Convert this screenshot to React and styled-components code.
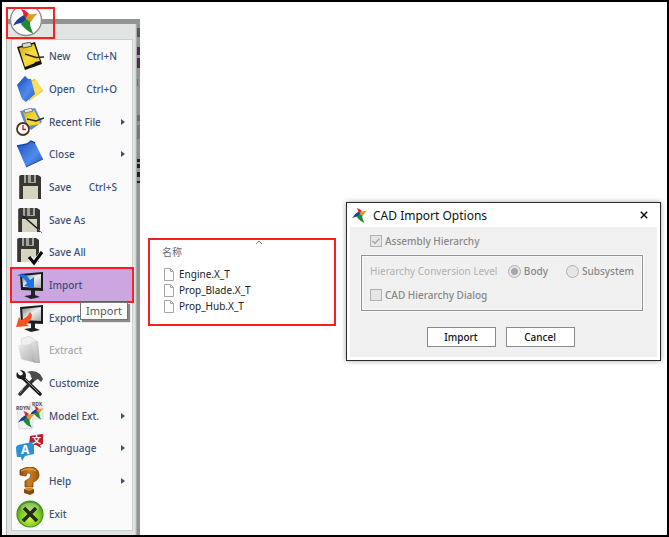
import React from "react";
import styled, { createGlobalStyle } from "styled-components";

const GlobalStyle = createGlobalStyle`
  * {
    box-sizing: border-box;
  }
  body {
    margin: 0;
    background: #fff;
    font-family: "Noto Sans", "Noto Sans CJK SC", sans-serif;
  }
  button, input {
    font-family: inherit;
  }
`;

const Page = styled.main`
  display: flex;
  align-items: flex-start;
  min-height: 100vh;
  padding: 5px 6px 0 4px;
  border: 2px solid #000;
`;

/* ---------- application menu ---------- */

const MenuColumn = styled.div`
  position: relative;
  display: flex;
  align-self: stretch;
  width: 134px;
  flex-shrink: 0;
  padding-top: 12px;
`;

const LogoButton = styled.button`
  position: absolute;
  top: 0;
  left: 0;
  z-index: 1;
  width: 49px;
  height: 32px;
  padding: 0;
  border: 2px solid #fa1e1e;
  background: none;
  overflow: hidden;
`;

const LogoCircle = styled.svg`
  display: block;
  width: 34px;
  height: 34px;
  margin: -6px 0 0 1px;
`;

const MenuFrame = styled.nav`
  position: relative;
  display: flex;
  flex: 1;
  padding: 20px 7px 4px 5px;
  border-top: 5px solid #929493;
  background: linear-gradient(
    to right,
    #b4b8b6 1px,
    #e0e5e2 1px calc(100% - 5px),
    #bfc5c2 calc(100% - 4px),
    #8f9391 calc(100% - 3px)
  );
`;

const Behind = styled.svg`
  position: absolute;
  top: 0;
  right: 0;
  width: 3px;
  height: 170px;
`;

const MenuList = styled.ul`
  display: flex;
  flex-direction: column;
  flex: 1;
  margin: -5px 0 0;
  padding: 0;
  border: 1px solid #c9d0cd;
  background: #fafafb;
  list-style: none;
`;

const MenuItem = styled.li`
  position: relative;
  display: flex;
  flex: 1 1 0;
  min-height: 30px;
`;

const MenuButton = styled.button`
  display: grid;
  grid-template-columns: 28px 1fr auto 8px;
  align-items: center;
  width: 100%;
  padding: 0 7px 0 4px;
  border: 0;
  background: ${(props) => (props.$active ? "#cba6e0" : "none")};
  outline: ${(props) => (props.$active ? "2px solid #fa1e1e" : "none")};
  color: ${(props) => (props.disabled ? "#a9a9ab" : "#3d5078")};
  font-size: 10px;
  font-weight: 500;
  line-height: 14px;
  text-align: left;
  white-space: nowrap;

  svg {
    display: block;
  }
`;

const MenuLabel = styled.span`
  padding-left: 5px;
`;

const Arrow = styled.span`
  justify-self: end;
  border: 3px solid transparent;
  border-left: 4px solid #3d5078;
  border-right: 0;
`;

const Tooltip = styled.span`
  position: absolute;
  top: 33px;
  left: 68px;
  z-index: 2;
  padding: 0 5px;
  border: 1px solid #767676;
  background: #fff;
  box-shadow: 2px 2px 1px #8a8a8a;
  color: #575757;
  font-size: 11px;
  line-height: 16px;
`;

/* ---------- file list ---------- */

const FileBox = styled.section`
  position: relative;
  flex: 0 1 188px;
  margin: 231px 0 0 8px;
  padding: 6px 12px 10px;
  border: 2px solid #fa1e1e;
`;

const SortMark = styled.svg`
  position: absolute;
  top: 0;
  left: 105px;
  width: 8px;
  height: 5px;
`;

const FileHeading = styled.h2`
  margin: 0 0 8px;
  color: #5b6b84;
  font-size: 10px;
  font-weight: 400;
  line-height: 12px;
`;

const FileList = styled.ul`
  margin: 0;
  padding: 0 0 0 2px;
  list-style: none;
`;

const FileRow = styled.li`
  display: flex;
  align-items: center;
  gap: 5px;
  height: 16px;
  color: #222;
  font-size: 10px;
`;

/* ---------- dialog ---------- */

const Dialog = styled.section`
  flex: 1;
  margin: 195px 0 0 10px;
  padding: 0 3px 3px;
  border: 1px solid #2b2b2b;
  background: #fff;
  box-shadow: 0 0 5px rgba(0, 0, 0, 0.35);
`;

const DialogHeader = styled.header`
  display: flex;
  align-items: center;
  gap: 6px;
  height: 24px;
  padding: 0 7px 0 2px;
`;

const DialogTitle = styled.h1`
  flex: 1;
  margin: 0;
  padding-top: 2px;
  color: #111;
  font-size: 12px;
  font-weight: 400;
  line-height: 16px;
`;

const CloseButton = styled.button`
  display: flex;
  padding: 2px;
  border: 0;
  background: none;
`;

const DialogBody = styled.form`
  padding: 7px 14px 10px 11px;
  background: #f0f0f0;
`;

const Option = styled.label`
  display: flex;
  align-items: center;
  gap: 3px;
  color: #878787;
  font-size: 10px;
  font-weight: 500;
  line-height: 14px;
  white-space: nowrap;
`;

const TopOption = styled(Option)`
  padding-left: 9px;
`;

const Check = styled.input`
  appearance: none;
  width: 12px;
  height: 12px;
  margin: 0;
  border: 1px solid #b0b0b0;
  background: #e6e6e6;

  &:checked {
    background: #e6e6e6
      url("data:image/svg+xml,%3Csvg xmlns='http://www.w3.org/2000/svg' viewBox='0 0 10 10'%3E%3Cpath d='M1.5 5l2.5 2.5 4.5-5' fill='none' stroke='%23a0a0a0' stroke-width='1.2'/%3E%3C/svg%3E");
  }
`;

const Radio = styled.input`
  appearance: none;
  width: 13px;
  height: 13px;
  margin: 0;
  border: 1px solid #b0b0b0;
  border-radius: 50%;
  background: #e6e6e6;

  &:checked {
    background: radial-gradient(circle, #a6a6a6 3px, #e6e6e6 4px);
  }
`;

const Group = styled.fieldset`
  display: flex;
  flex-direction: column;
  gap: 10px;
  margin: 7px 0 16px;
  padding: 8px 8px 8px;
  border: 1px solid #929292;
  box-shadow: inset 0 0 0 1px #fafafa, 0 0 0 1px #fafafa;
`;

const LevelRow = styled.div`
  display: flex;
  align-items: center;
`;

const LevelName = styled.span`
  flex: 1;
  color: #b0b0b0;
  font-size: 10px;
  line-height: 14px;
  white-space: nowrap;
`;

const Radios = styled.div`
  display: flex;
  gap: 18px;
`;

const Actions = styled.div`
  display: flex;
  justify-content: center;
  gap: 10px;
  padding-right: 3px;
`;

const ActionButton = styled.button`
  width: 69px;
  height: 20px;
  padding: 0;
  border: 1px solid #8a8a8a;
  background: #fff;
  color: #111;
  font-size: 10px;
  font-weight: 500;
`;

/* ---------- icons, all on a 28px grid ---------- */

const Icon = ({ children, size = 28 }) => (
  <svg width={size} height={size} viewBox="0 0 28 28" aria-hidden="true">
    {children}
  </svg>
);

const StarShape = () => (
  <>
    <path d="M9 0 Q14 1 18 5 L15 11 L12 8 Q12 4 9 0z" fill="#e2232b" />
    <path d="M28 5 Q23 9 20 15 L14 12 L17 6 Q22 6 28 5z" fill="#dd9a22" />
    <path d="M23 28 Q15 25 9 17 L14 11 L19 14 Q19 21 23 28z" fill="#1d8b34" />
    <path d="M0 19 Q4 11 12 7 L15 11 L10 16 Q5 16 0 19z" fill="#1b3a9c" />
  </>
);

const Gradients = () => (
  <svg width="0" height="0" style={{ position: "absolute" }} aria-hidden="true">
    <defs>
      <linearGradient id="yellow" x1="0" y1="0" x2="1" y2="1">
        <stop offset="0" stopColor="#c9a515" />
        <stop offset="0.5" stopColor="#f8dc3c" />
        <stop offset="1" stopColor="#f1c81e" />
      </linearGradient>
      <linearGradient id="blue" x1="0" y1="0" x2="1" y2="1">
        <stop offset="0" stopColor="#1d50c4" />
        <stop offset="0.6" stopColor="#4f8bea" />
        <stop offset="1" stopColor="#2456c4" />
      </linearGradient>
      <linearGradient id="screen" x1="0" y1="0" x2="1" y2="1">
        <stop offset="0" stopColor="#77797c" />
        <stop offset="0.5" stopColor="#eceeef" />
        <stop offset="1" stopColor="#a4a7aa" />
      </linearGradient>
      <linearGradient id="paper" x1="0" y1="0" x2="1" y2="1">
        <stop offset="0" stopColor="#ececec" />
        <stop offset="1" stopColor="#adadad" />
      </linearGradient>
      <linearGradient id="brown" x1="0" y1="0" x2="1" y2="0">
        <stop offset="0" stopColor="#8a4b08" />
        <stop offset="0.5" stopColor="#cf801c" />
        <stop offset="1" stopColor="#96540c" />
      </linearGradient>
      <radialGradient id="green" cx="0.5" cy="0.65" r="0.6">
        <stop offset="0" stopColor="#d4f54a" />
        <stop offset="0.6" stopColor="#82cc22" />
        <stop offset="1" stopColor="#4c9c18" />
      </radialGradient>
    </defs>
  </svg>
);

const NewIcon = () => (
  <Icon>
    <path d="M1 5 L19 0 L26 22 L9 28z" fill="#15130c" />
    <path d="M3 6 L18 2 L24 19 L9 25z" fill="url(#yellow)" />
    <path d="M17 25 L19 20 L25 19z" fill="#15130c" />
    <path d="M6 2 L14 0 L16 4 L7 6z" fill="#d8d8d2" stroke="#33312a" strokeWidth="0.8" />
    <path d="M9 12 L20 15.5 L28 15" fill="none" stroke="#2a2820" strokeWidth="1.5" />
  </Icon>
);

const OpenIcon = () => (
  <Icon>
    <path d="M13 6 L19 4 L27 16 L13 26z" fill="#e0b81b" />
    <path d="M15 6 L20 5 L27 15 L14 25z" fill="#f9df5c" />
    <path d="M1 10 L9 1 L12 4 L15 4 L19 19 L10 27 L6 24z" fill="url(#blue)" />
    <path d="M1 10 L9 1 L12 4 L4 12z" fill="#2d63cb" opacity="0.6" />
  </Icon>
);

const RecentIcon = () => (
  <Icon>
    <path d="M4 3 L19 0 L26 14 L15 22 L8 14z" fill="#5f86d6" />
    <path d="M7 4 L18 2 L25 16 L12 18z" fill="url(#yellow)" />
    <path d="M8 2 L15 0 L17 3 L9 5z" fill="#e6e6ea" stroke="#50618d" strokeWidth="0.7" />
    <path d="M11 11 L20 13 L28 10" fill="none" stroke="#2a2820" strokeWidth="1.5" />
    <circle cx="7" cy="21" r="6" fill="#fff" stroke="#4d3520" strokeWidth="1.8" />
    <path d="M7 17 V21.5 H10" fill="none" stroke="#dc2027" strokeWidth="1.4" />
  </Icon>
);

const CloseIcon = () => (
  <Icon>
    <path d="M1 6 L11 4 L15 1 L19 3 L27 19 L10 27z" fill="url(#blue)" />
    <path d="M1 6 L11 4 L15 1 L19 3" fill="none" stroke="#1745ac" strokeWidth="1.4" />
    <path d="M10 27 L27 19" stroke="#1b48ad" strokeWidth="1" />
  </Icon>
);

const Floppy = ({ x = 0 }) => (
  <g transform={`translate(${x} 0)`}>
    <path d="M3 3 L5 2 H22 L25 4 V26 H3z" fill="#373633" />
    <path d="M8 2 H20 V10 H8z" fill="#a3a39f" />
    <path d="M10 2 H12 V10 H10z M15 2 H18 V9 H15z" fill="#45443f" />
    <path d="M7 13 H22 V26 H7z" fill="#d8d3bf" />
    <path d="M3.5 3 V26" stroke="#5e5d59" strokeWidth="1" />
  </g>
);

const SaveIcon = () => (
  <Icon>
    <Floppy />
  </Icon>
);

const SaveAsIcon = () => (
  <Icon>
    <Floppy x={-1} />
    <path d="M7 10 L22 23" stroke="#1d1c1a" strokeWidth="1.6" />
    <path d="M22 23 L26 27" stroke="#77746a" strokeWidth="1" />
  </Icon>
);

const SaveAllIcon = () => (
  <Icon>
    <g transform="translate(-2 -2)">
      <Floppy />
    </g>
    <path d="M14 20 L18 25 L26 15" fill="none" stroke="#fff" strokeWidth="5" />
    <path d="M13 19 L18 25 L26 14" fill="none" stroke="#0b0b0b" strokeWidth="3.2" />
  </Icon>
);

const Monitor = () => (
  <>
    <path d="M4 3 L27 1 V20 L5 19z" fill="#191b1d" />
    <path d="M6 5 L25 3 V17 L7 16z" fill="url(#screen)" />
    <path d="M15 19 H19 L19 24 L24 26 L15 28 L8 25 L15 24z" fill="#202224" />
  </>
);

const ImportIcon = () => (
  <Icon>
    <Monitor />
    <path d="M1 4 Q10 1 14 9 L18 6 V17 L8 15 L11 12 Q8 6 1 4z" fill="#1672e8" />
  </Icon>
);

const ExportIcon = () => (
  <Icon>
    <Monitor />
    <path d="M14 8 L16 11 Q15 18 10 20 L13 22 L0 23 L3 13 L5 16 Q11 14 14 8z" fill="#f4541c" />
  </Icon>
);

const ExtractIcon = () => (
  <Icon>
    <path d="M5 3 L13 0 L21 5 V22 L8 24z" fill="#f0f0f0" stroke="#d0d0d0" strokeWidth="0.6" />
    <path d="M13 8 L16 5 L22 5 L24 27 L18 27z" fill="url(#paper)" />
    <path d="M2 9 L16 8 L20 27 L5 23z" fill="url(#paper)" />
  </Icon>
);

const ToolsIcon = () => (
  <Icon>
    <path d="M6 8 L24 25" stroke="#1e1e1e" strokeWidth="3.6" strokeLinecap="round" />
    <path d="M4 1 L7 4 L6 7 L3 6 L1 3 Q-1 9 4 10 L9 11 L10 7 Q10 1 4 1z" fill="#1e1e1e" />
    <path d="M19 9 L4 25" stroke="#2f2f2f" strokeWidth="3.4" strokeLinecap="round" />
    <path d="M11 3 Q18 0 24 5 L27 10 L25 13 L22 10 L18 12 L15 8 Q15 4 11 3z" fill="#4c4c4c" />
    <path d="M7 20 L4 24 M9 10 L23 24" stroke="#9b9b9b" strokeWidth="0.9" />
  </Icon>
);

const SheetLabel = styled.text`
  font-size: 5px;
  font-weight: 700;
  fill: #555;
`;

const ModelIcon = () => (
  <Icon>
    <path d="M14 0 H24 L27 4 V17 H14z" fill="#eee" stroke="#ccc" strokeWidth="0.6" />
    <path d="M1 5 L13 4 L17 8 V26 L3 27z" fill="#f1f1f1" stroke="#ccc" strokeWidth="0.6" />
    <g transform="translate(14 4) scale(.48)">
      <StarShape />
    </g>
    <g transform="translate(2 9) scale(.6)">
      <StarShape />
    </g>
    <SheetLabel x="0" y="8">RDYN</SheetLabel>
    <SheetLabel x="16" y="4">RDX</SheetLabel>
  </Icon>
);

const BubbleGlyph = styled.text`
  font-size: ${(props) => props.$size}px;
  font-weight: 700;
  fill: #fff;
`;

const LanguageIcon = () => (
  <Icon>
    <path d="M14 2 L26 0 Q28 0 27 3 L27 10 L24 11 L25 14 L20 11 L13 11z" fill="#b91f2e" />
    <path d="M2 11 L16 8 Q19 8 18 11 V20 L9 22 L6 27 L5 23 L1 23 Q0 17 0 13z" fill="#2a92d6" />
    <BubbleGlyph $size={12} x="5" y="20">A</BubbleGlyph>
    <BubbleGlyph $size={9} x="16" y="9">文</BubbleGlyph>
  </Icon>
);

const HelpIcon = () => (
  <Icon>
    <path
      d="M4 3 Q9 0 15 0 Q23 1 23 8 Q23 13 17 15 L17 20 H9 V14 Q15 12 15 8 Q14 5 11 6 L10 9 L4 8z"
      fill="url(#brown)"
      stroke="#75400a"
      strokeWidth="0.8"
    />
    <path d="M8 22 L14 21 L18 22 V26 L14 28 L8 26z" fill="#8b4a0b" />
    <path d="M8 22 L14 21 L18 22 L13 24z" fill="#d78a27" />
    <path d="M5 4 Q13 0 20 4" fill="none" stroke="#eeb04a" strokeWidth="1" />
  </Icon>
);

const ExitIcon = () => (
  <Icon>
    <circle cx="14" cy="14" r="13" fill="url(#green)" stroke="#4c8c22" strokeWidth="1.2" />
    <ellipse cx="14" cy="8" rx="9" ry="5" fill="#fff" opacity="0.3" />
    <path d="M8 8 L21 21 M20 8 L7 21" stroke="#262b20" strokeWidth="3.6" />
  </Icon>
);

const FileIcon = () => (
  <svg width="10" height="13" viewBox="0 0 10 13" aria-hidden="true">
    <path d="M.5 .5 H6.5 L9.5 3.5 V12.5 H.5z" fill="#fcfcfc" stroke="#a6a6a6" />
    <path d="M6.5 .5 V3.5 H9.5" fill="none" stroke="#a6a6a6" />
  </svg>
);

const menuItems = [
  { label: "New", shortcut: "Ctrl+N", icon: NewIcon },
  { label: "Open", shortcut: "Ctrl+O", icon: OpenIcon },
  { label: "Recent File", submenu: true, icon: RecentIcon },
  { label: "Close", submenu: true, icon: CloseIcon },
  { label: "Save", shortcut: "Ctrl+S", icon: SaveIcon },
  { label: "Save As", icon: SaveAsIcon },
  { label: "Save All", icon: SaveAllIcon },
  { label: "Import", active: true, tooltip: "Import", icon: ImportIcon },
  { label: "Export", icon: ExportIcon },
  { label: "Extract", disabled: true, icon: ExtractIcon },
  { label: "Customize", icon: ToolsIcon },
  { label: "Model Ext.", submenu: true, icon: ModelIcon },
  { label: "Language", submenu: true, icon: LanguageIcon },
  { label: "Help", submenu: true, icon: HelpIcon },
  { label: "Exit", icon: ExitIcon },
];

const files = ["Engine.X_T", "Prop_Blade.X_T", "Prop_Hub.X_T"];

const AppMenu = () => (
  <MenuColumn>
    <LogoButton type="button" aria-label="Application menu">
      <LogoCircle viewBox="0 0 34 34">
        <circle cx="17" cy="17" r="15.5" fill="#fff" stroke="#8e8e8e" strokeWidth="1.4" />
        <g transform="translate(4 6) scale(.88)">
          <StarShape />
        </g>
      </LogoCircle>
    </LogoButton>
    <MenuFrame>
      <Behind viewBox="0 0 3 170">
        <path d="M0 4h3v9H0z" fill="#55575a" />
        <path d="M0 23h3v21H0z" fill="#4b2b51" />
        <path d="M0 31h3v3H0z" fill="#a58fab" />
        <path d="M0 55h1v7H0z M0 91h3v6H0z" fill="#6a6c6b" />
        <path d="M0 101h3v14H0z" fill="#777978" />
        <path d="M0 135h3v3H0z M0 140h3v4H0z M0 148h3v5H0z M0 157h3v2H0z" fill="#222" />
      </Behind>
      <MenuList>
        {menuItems.map(({ label, shortcut, submenu, active, disabled, tooltip, icon: ItemIcon }) => (
          <MenuItem key={label}>
            <MenuButton type="button" $active={active} disabled={disabled}>
              <ItemIcon />
              <MenuLabel>{label}</MenuLabel>
              <span>{shortcut}</span>
              {submenu && <Arrow />}
            </MenuButton>
            {tooltip && <Tooltip role="tooltip">{tooltip}</Tooltip>}
          </MenuItem>
        ))}
      </MenuList>
    </MenuFrame>
  </MenuColumn>
);

const ImportDialog = () => (
  <Dialog role="dialog" aria-labelledby="dialog-title">
    <DialogHeader>
      <Icon size={15}>
        <StarShape />
      </Icon>
      <DialogTitle id="dialog-title">CAD Import Options</DialogTitle>
      <CloseButton type="button" aria-label="Close dialog">
        <svg width="8" height="8" viewBox="0 0 8 8">
          <path d="M.8 .8 L7.2 7.2 M7.2 .8 L.8 7.2" stroke="#111" strokeWidth="1.5" />
        </svg>
      </CloseButton>
    </DialogHeader>
    <DialogBody onSubmit={(e) => e.preventDefault()}>
      <TopOption>
        <Check type="checkbox" defaultChecked disabled />
        Assembly Hierarchy
      </TopOption>
      <Group disabled>
        <LevelRow role="radiogroup" aria-labelledby="level-name">
          <LevelName id="level-name">Hierarchy Conversion Level</LevelName>
          <Radios>
            <Option>
              <Radio type="radio" name="level" defaultChecked />
              Body
            </Option>
            <Option>
              <Radio type="radio" name="level" />
              Subsystem
            </Option>
          </Radios>
        </LevelRow>
        <Option>
          <Check type="checkbox" />
          CAD Hierarchy Dialog
        </Option>
      </Group>
      <Actions>
        <ActionButton type="submit">Import</ActionButton>
        <ActionButton type="button">Cancel</ActionButton>
      </Actions>
    </DialogBody>
  </Dialog>
);

const App = () => {
  return (
    <Page>
      <GlobalStyle />
      <Gradients />
      <AppMenu />
      <FileBox>
        <SortMark viewBox="0 0 8 5">
          <path d="M1 4 L4 1 L7 4" fill="none" stroke="#777" />
        </SortMark>
        <FileHeading>名称</FileHeading>
        <FileList>
          {files.map((name) => (
            <FileRow key={name}>
              <FileIcon />
              {name}
            </FileRow>
          ))}
        </FileList>
      </FileBox>
      <ImportDialog />
    </Page>
  );
};

export default App;
